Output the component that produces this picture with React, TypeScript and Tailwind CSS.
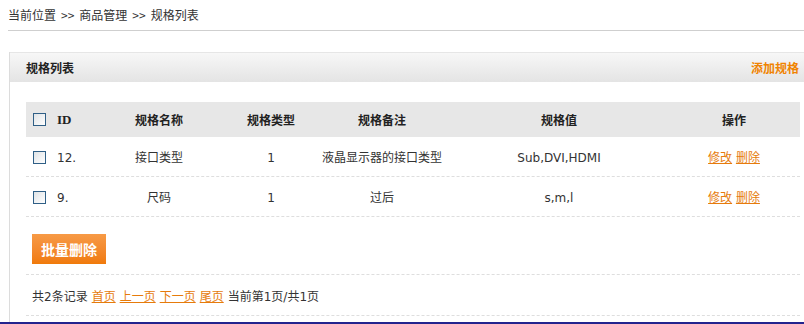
const rows = [
  { id: "12.", name: "接口类型", type: "1", note: "液晶显示器的接口类型", value: "Sub,DVI,HDMI" },
  { id: "9.", name: "尺码", type: "1", note: "过后", value: "s,m,l" },
];

const cols = "grid grid-cols-[78px_110px_114px_108px_246px_104px_1fr] items-center";

function Box() {
  return (
    <span className="inline-block w-[13px] h-[13px] border border-[#2f5f86] bg-gradient-to-br from-[#dfe3e6] to-[#ffffff]" />
  );
}

export default function App() {
  return (
    <div className="w-[804px] h-[324px] overflow-hidden bg-white text-[12px] text-[#333] font-['DejaVu_Sans','Noto_Sans_CJK_SC',sans-serif]">
      {/* breadcrumb */}
      <div className="h-[31px] flex items-center border-b border-[#cfcfcf] ml-2 font-['Noto_Sans_CJK_SC',sans-serif] text-[12px] text-[#333]">
        <span>当前位置</span>
        <span className="mx-[5px]">&gt;&gt;</span>
        <span>商品管理</span>
        <span className="mx-[5px]">&gt;&gt;</span>
        <span>规格列表</span>
      </div>

      <div className="ml-[9px] mt-[21px] border-l border-[#dcdcdc] h-[270px]">
        {/* panel header */}
        <div className="h-[30px] flex items-center justify-between pl-[16px] pr-[5px] bg-gradient-to-b from-[#f7f7f7] to-[#e4e4e4] border-t border-[#e6e6e6] font-['Noto_Sans_CJK_SC',sans-serif] font-bold text-[12px]">
          <span className="text-[#222]">规格列表</span>
          <span className="text-[#f08300]">添加规格</span>
        </div>

        <div className="pl-[16px] pr-[4px] pt-[20px]">
          {/* table head */}
          <div className={`${cols} h-[35px] bg-[#e7e7e7] font-bold font-['Noto_Sans_CJK_SC',sans-serif] text-[#222]`}>
            <div className="flex items-center gap-[11px] pl-[7px]">
              <Box />
              <span className="font-['Liberation_Serif',serif] text-[13px]">ID</span>
            </div>
            <div className="text-center">规格名称</div>
            <div className="text-center">规格类型</div>
            <div className="text-center">规格备注</div>
            <div className="text-center">规格值</div>
            <div className="text-center">操作</div>
            <div />
          </div>

          {rows.map((r) => (
            <div key={r.id} className={`${cols} h-[40px] pt-[2px] border-b border-dashed border-[#dedede]`}>
              <div className="flex items-center gap-[11px] pl-[7px]">
                <Box />
                <span>{r.id}</span>
              </div>
              <div className="text-center">{r.name}</div>
              <div className="text-center">{r.type}</div>
              <div className="text-center whitespace-nowrap -mx-[10px]">{r.note}</div>
              <div className="text-center">{r.value}</div>
              <div className="text-center text-[#e67b0c]">
                <a className="underline">修改</a> <a className="underline">删除</a>
              </div>
              <div />
            </div>
          ))}

          <div className="pt-[17px] pb-[10px] pl-[6px] border-b border-dashed border-[#dedede]">
            <button className="w-[74px] h-[30px] bg-gradient-to-b from-[#f79a45] to-[#f07a08] text-white font-bold text-[14px] font-['Noto_Sans_CJK_SC',sans-serif]">
              批量删除
            </button>
          </div>

          <div className="h-[41px] flex items-center pt-[4px] pl-[6px] gap-[4px] border-b border-dashed border-[#dedede]">
            <span>共2条记录</span>
            <a className="underline text-[#e67b0c]">首页</a>
            <a className="underline text-[#e67b0c]">上一页</a>
            <a className="underline text-[#e67b0c]">下一页</a>
            <a className="underline text-[#e67b0c]">尾页</a>
            <span>当前第1页/共1页</span>
          </div>
        </div>
      </div>
      <div className="h-[2px] bg-[#23238e]" />
    </div>
  );
}
